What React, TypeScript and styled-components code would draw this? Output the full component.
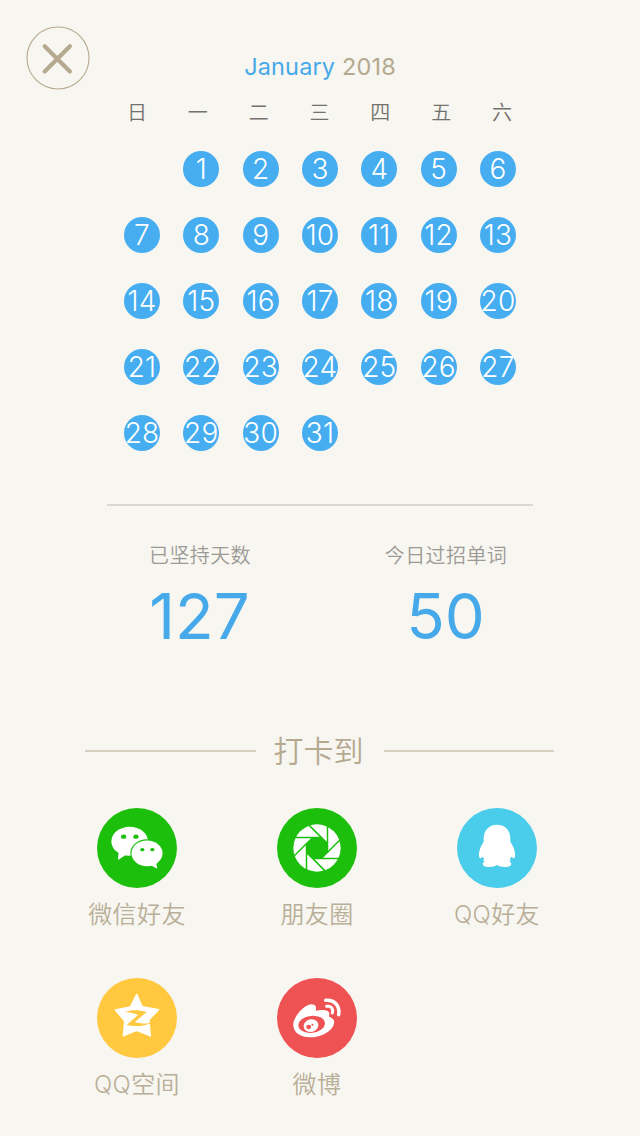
import React from 'react';
import styled, { createGlobalStyle } from 'styled-components';

const GlobalStyle = createGlobalStyle`
  * { box-sizing: border-box; }
  body {
    margin: 0;
    background: #f8f6f0;
    font-family: Inter, "Noto Sans CJK SC", sans-serif;
  }
`;

const Screen = styled.main`
  width: 640px;
  height: 1136px;
  overflow: hidden;
  background: #f8f6f0;
  display: flex;
  flex-direction: column;
  > * { flex-shrink: 0; }
`;

const TopBar = styled.header`
  height: 98px;
  padding: 26px 26px 0;
  display: grid;
  grid-template-columns: 64px 1fr 64px;
  align-items: start;
`;

const CloseButton = styled.button`
  width: 64px;
  height: 64px;
  padding: 0;
  border: 0;
  background: none;
  display: block;
`;

const Month = styled.h1`
  margin: 26px 0 0;
  font-size: 23.5px;
  line-height: 30px;
  font-weight: 380;
  letter-spacing: 0.15px;
  text-align: center;
  color: #b5a98f;
`;

const MonthName = styled.span`
  color: #46a9ea;
`;

const Weekdays = styled.div`
  width: 385px;
  margin-left: 127px;
  height: 30px;
  display: flex;
  justify-content: space-between;
  font-size: 20px;
  line-height: 30px;
  font-weight: 350;
  color: #73716d;
`;

const Days = styled.div`
  width: 392px;
  margin: 23px 0 0 124px;
  display: grid;
  grid-template-columns: repeat(7, 36px);
  justify-content: space-between;
  row-gap: 30px;
`;

const Day = styled.span<{ $column?: number }>`
  ${({ $column }) => ($column ? `grid-column: ${$column};` : '')}
  width: 36px;
  height: 36px;
  border-radius: 50%;
  background: #45adf0;
  color: #fff;
  display: flex;
  align-items: center;
  justify-content: center;
  font-size: 28px;
  line-height: 36px;
  font-weight: 340;
  letter-spacing: 0.2px;
`;

const Divider = styled.hr`
  width: 426px;
  height: 2px;
  margin: 53px 0 0 107px;
  border: 0;
  background: #dad8d2;
`;

const Stats = styled.section`
  display: flex;
  padding: 35px 71px 0 77px;
`;

const Stat = styled.div`
  flex: 1;
  display: flex;
  flex-direction: column;
  align-items: center;
`;

const StatLabel = styled.span`
  font-size: 20px;
  line-height: 30px;
  font-weight: 350;
  letter-spacing: 0.4px;
  color: #9b9a96;
`;

const StatValue = styled.span`
  margin-top: 7px;
  padding-right: 1px;
  font-size: 63.5px;
  line-height: 76px;
  font-weight: 380;
  letter-spacing: 0;
  color: #46a9ea;
`;

const ShareHeading = styled.div`
  display: grid;
  grid-template-columns: 171px 1fr 170px;
  align-items: center;
  width: 469px;
  height: 44px;
  margin: 75px 0 0 85px;
`;

const Rule = styled.span`
  height: 2px;
  background: #d6d0c0;
`;

const ShareTitle = styled.h2`
  margin: 0 3px 0 0;
  font-size: 30px;
  line-height: 44px;
  font-weight: 350;
  text-align: center;
  color: #b5a98f;
`;

const ShareGrid = styled.section`
  width: 540px;
  margin: 35px 0 0 47px;
  display: grid;
  grid-template-columns: repeat(3, 180px);
  grid-auto-rows: 170px;
`;

const ShareItem = styled.div`
  display: flex;
  flex-direction: column;
  align-items: center;
`;

const Badge = styled.span<{ $color: string }>`
  width: 80px;
  height: 80px;
  border-radius: 50%;
  background: ${({ $color }) => $color};
  svg { display: block; }
`;

const ShareLabel = styled.span`
  margin-top: 9px;
  font-size: 24px;
  line-height: 36px;
  font-weight: 350;
  letter-spacing: 0.4px;
  color: #b9af99;
`;

const GREEN = '#1dbf0d';
const YELLOW = '#ffc83f';
const RED = '#ef5253';

const CloseIcon = () => (
  <svg width="64" height="64" viewBox="0 0 64 64" fill="none" stroke="#b5a98f">
    <circle cx="32" cy="32" r="31" strokeWidth="1.1" />
    <path d="M18.7 20.2 43.9 45.4M43.9 20.2 18.7 45.4" strokeWidth="4.2" strokeLinecap="round" />
  </svg>
);

const WechatIcon = () => (
  <svg width="80" height="80" viewBox="51 24 240 240" fill="#fff">
    <ellipse cx="149" cy="124" rx="55" ry="43.5" />
    <path d="M116 152 114 180 137 165Z" />
    <ellipse cx="201" cy="160" rx="50" ry="42" fill={GREEN} />
    <ellipse cx="201" cy="160" rx="46.5" ry="38.5" />
    <path d="M212 196 232 206 228 186Z" />
    <g fill={GREEN}>
      <ellipse cx="131" cy="110" rx="8" ry="6.5" />
      <ellipse cx="168" cy="110" rx="8" ry="6.5" />
      <ellipse cx="187" cy="149" rx="6.5" ry="5" />
      <ellipse cx="217" cy="149" rx="6.5" ry="5" />
    </g>
  </svg>
);

const MomentsIcon = () => (
  <svg width="80" height="80" viewBox="51 24 240 240">
    <circle cx="171" cy="144" r="71" fill="#fff" />
    <path d="M158 112H184L203 131V157L184 176H158L139 157V131Z" fill={GREEN} />
    <g stroke={GREEN} strokeWidth="4.5">
      {[0, 45, 90, 135, 180, 225, 270, 315].map((angle) => (
        <path key={angle} d="M184 112.5H98" transform={`rotate(${angle} 171 144)`} />
      ))}
    </g>
  </svg>
);

const QqIcon = () => (
  <svg width="80" height="80" viewBox="51 24 240 240" fill="#fff">
    <path d="M171 74C145 74 131 93 131 116C131 119 132 122 130 127C124 137 118 149 117 160C116 169 118 175 121 175C123 175 125 172 127 170L133 178 129 182 135 184C129 187 127 190 129 194C131 199 138 201 147 201C158 201 166 198 170 195C176 198 183 201 194 201C204 201 212 199 213 194C215 190 213 187 207 184L213 182 209 178 215 170C217 172 219 175 221 175C225 175 226 168 225 160C224 149 218 137 212 127C210 122 211 119 211 116C211 93 197 74 171 74Z" />
  </svg>
);

const QzoneIcon = () => (
  <svg width="80" height="80" viewBox="51 24 240 240">
    <path
      d="M170 73 187 110 236 119 207 149 211 198 170 181 130 198 134 153 106 120 151 111Z"
      fill="#fff"
      stroke="#fff"
      strokeWidth="4"
      strokeLinejoin="round"
    />
    <path
      d="M135 126C154 119 177 120 200 126L164 157C179 161 196 162 214 158C195 169 163 171 140 165L174 135C162 130 149 127 135 126Z"
      fill={YELLOW}
    />
    <path d="M207 160 226 153" stroke={YELLOW} strokeWidth="4" />
  </svg>
);

const WeiboIcon = () => (
  <svg width="80" height="80" viewBox="51 24 240 240">
    <path
      d="M100 160C103 143 118 122 137 109C150 100 166 100 168 112C169 117 166 121 168 122C176 121 190 117 203 123C210 127 208 135 207 140C217 143 225 150 222 161C217 183 185 202 150 202C120 202 97 186 100 160Z"
      fill="#fff"
    />
    <ellipse cx="155" cy="163" rx="40" ry="25.5" fill={RED} transform="rotate(-6 155 163)" />
    <ellipse cx="153" cy="167" rx="22.5" ry="19" fill="#fff" transform="rotate(-15 153 167)" />
    <ellipse cx="146" cy="171" rx="7.5" ry="6.5" fill={RED} />
    <circle cx="157.5" cy="164.5" r="3" fill={RED} />
    <g fill="none" stroke="#fff" strokeLinecap="round">
      <path d="M197 91C222 87 241 108 236 134" strokeWidth="10.5" />
      <path d="M200 109C213 106 221 116 217 129" strokeWidth="9" />
    </g>
  </svg>
);

const channels = [
  { label: '微信好友', color: GREEN, icon: <WechatIcon /> },
  { label: '朋友圈', color: GREEN, icon: <MomentsIcon /> },
  { label: 'QQ好友', color: '#49cdea', icon: <QqIcon /> },
  { label: 'QQ空间', color: YELLOW, icon: <QzoneIcon /> },
  { label: '微博', color: RED, icon: <WeiboIcon /> },
];

const weekdays = ['日', '一', '二', '三', '四', '五', '六'];
const days = Array.from({ length: 31 }, (_, i) => i + 1);

export default function App() {
  return (
    <>
      <GlobalStyle />
      <Screen>
        <TopBar>
          <CloseButton aria-label="关闭">
            <CloseIcon />
          </CloseButton>
          <Month>
            <MonthName>January</MonthName> 2018
          </Month>
        </TopBar>
        <Weekdays>
          {weekdays.map((name) => (
            <span key={name}>{name}</span>
          ))}
        </Weekdays>
        <Days>
          {days.map((day) => (
            <Day key={day} $column={day === 1 ? 2 : undefined}>
              {day}
            </Day>
          ))}
        </Days>
        <Divider />
        <Stats>
          <Stat>
            <StatLabel>已坚持天数</StatLabel>
            <StatValue>127</StatValue>
          </Stat>
          <Stat>
            <StatLabel>今日过招单词</StatLabel>
            <StatValue>50</StatValue>
          </Stat>
        </Stats>
        <ShareHeading>
          <Rule />
          <ShareTitle>打卡到</ShareTitle>
          <Rule />
        </ShareHeading>
        <ShareGrid>
          {channels.map(({ label, color, icon }) => (
            <ShareItem key={label}>
              <Badge $color={color}>{icon}</Badge>
              <ShareLabel>{label}</ShareLabel>
            </ShareItem>
          ))}
        </ShareGrid>
      </Screen>
    </>
  );
}
